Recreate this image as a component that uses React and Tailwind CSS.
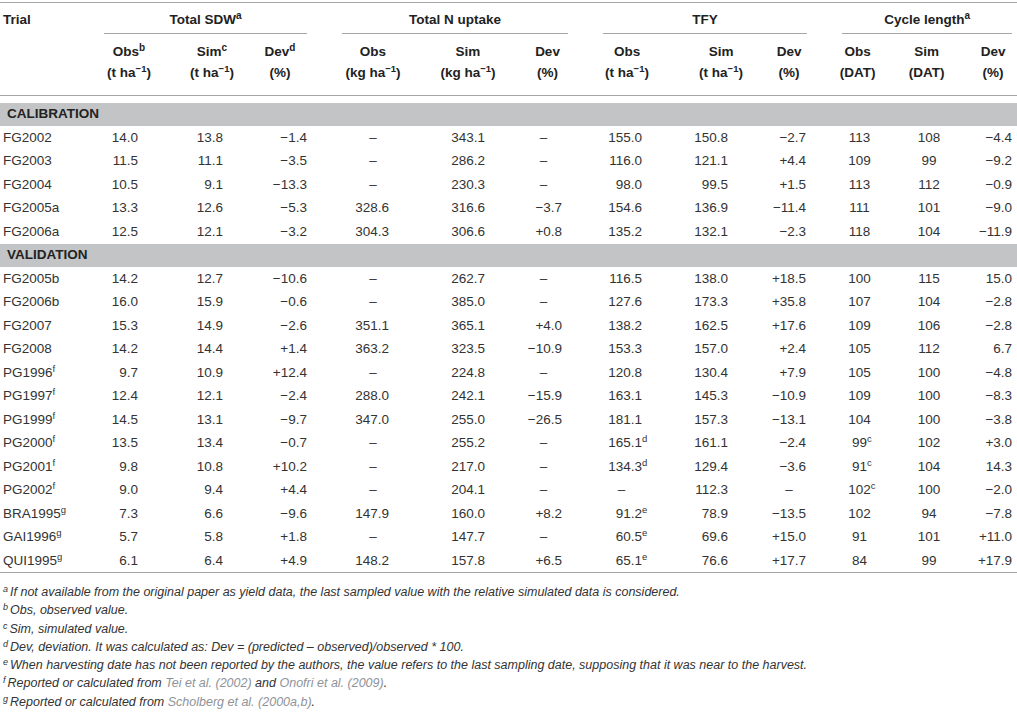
import React from "react";

const M = "\u2212";
const D = "\u2013";

const widths = ["w-[88px]", "w-[82px]", "w-[76px]", "w-[80px]", "w-[94px]", "w-[88px]", "w-[79px]", "w-[87px]", "w-[81px]", "w-[68px]", "w-[69px]", "w-[69px]", "w-[56px]"];

const numCls = [
  "text-right pr-[32px]",
  "text-right pr-[23px]",
  "text-right pr-[19px]",
  "text-right pr-[31px]",
  "text-right pr-[23px]",
  "text-right pr-[25px]",
  "text-right pr-[32px]",
  "text-right pr-[27px]",
  "text-right pr-[17px]",
  "text-center pl-[4px]",
  "text-center pl-[5px]",
  "text-right pr-[5px]",
];

const dashCls = [
  "text-center",
  "text-center",
  "text-center",
  "text-center",
  "text-center",
  "text-center pr-[8px]",
  "text-center pr-[18px]",
  "text-center",
  "text-center",
  "text-center",
  "text-center",
  "text-center",
];

const headCls = [
  "text-center",
  "text-center pl-[8px]",
  "text-center pr-[12px]",
  "text-center",
  "text-center pl-[8px]",
  "text-center",
  "text-center pr-[7px]",
  "text-center pl-[13px]",
  "text-center",
  "text-center",
  "text-center",
  "text-center pl-[8px]",
];

const subHeads = [
  ["Obs", "b"], ["Sim", "c"], ["Dev", "d"],
  ["Obs"], ["Sim"], ["Dev"],
  ["Obs"], ["Sim"], ["Dev"],
  ["Obs"], ["Sim"], ["Dev"],
];

const units = ["t", "t", "%", "kg", "kg", "%", "t", "t", "%", "DAT", "DAT", "%"];

const calibration = [
  ["FG2002", "", "14.0", "13.8", M + "1.4", D, "343.1", D, "155.0", "150.8", M + "2.7", "113", "108", M + "4.4"],
  ["FG2003", "", "11.5", "11.1", M + "3.5", D, "286.2", D, "116.0", "121.1", "+4.4", "109", "99", M + "9.2"],
  ["FG2004", "", "10.5", "9.1", M + "13.3", D, "230.3", D, "98.0", "99.5", "+1.5", "113", "112", M + "0.9"],
  ["FG2005a", "", "13.3", "12.6", M + "5.3", "328.6", "316.6", M + "3.7", "154.6", "136.9", M + "11.4", "111", "101", M + "9.0"],
  ["FG2006a", "", "12.5", "12.1", M + "3.2", "304.3", "306.6", "+0.8", "135.2", "132.1", M + "2.3", "118", "104", M + "11.9"],
];

const validation = [
  ["FG2005b", "", "14.2", "12.7", M + "10.6", D, "262.7", D, "116.5", "138.0", "+18.5", "100", "115", "15.0"],
  ["FG2006b", "", "16.0", "15.9", M + "0.6", D, "385.0", D, "127.6", "173.3", "+35.8", "107", "104", M + "2.8"],
  ["FG2007", "", "15.3", "14.9", M + "2.6", "351.1", "365.1", "+4.0", "138.2", "162.5", "+17.6", "109", "106", M + "2.8"],
  ["FG2008", "", "14.2", "14.4", "+1.4", "363.2", "323.5", M + "10.9", "153.3", "157.0", "+2.4", "105", "112", "6.7"],
  ["PG1996", "f", "9.7", "10.9", "+12.4", D, "224.8", D, "120.8", "130.4", "+7.9", "105", "100", M + "4.8"],
  ["PG1997", "f", "12.4", "12.1", M + "2.4", "288.0", "242.1", M + "15.9", "163.1", "145.3", M + "10.9", "109", "100", M + "8.3"],
  ["PG1999", "f", "14.5", "13.1", M + "9.7", "347.0", "255.0", M + "26.5", "181.1", "157.3", M + "13.1", "104", "100", M + "3.8"],
  ["PG2000", "f", "13.5", "13.4", M + "0.7", D, "255.2", D, "165.1^d", "161.1", M + "2.4", "99^c", "102", "+3.0"],
  ["PG2001", "f", "9.8", "10.8", "+10.2", D, "217.0", D, "134.3^d", "129.4", M + "3.6", "91^c", "104", "14.3"],
  ["PG2002", "f", "9.0", "9.4", "+4.4", D, "204.1", D, D, "112.3", D, "102^c", "100", M + "2.0"],
  ["BRA1995", "g", "7.3", "6.6", M + "9.6", "147.9", "160.0", "+8.2", "91.2^e", "78.9", M + "13.5", "102", "94", M + "7.8"],
  ["GAI1996", "g", "5.7", "5.8", "+1.8", D, "147.7", D, "60.5^e", "69.6", "+15.0", "91", "101", "+11.0"],
  ["QUI1995", "g", "6.1", "6.4", "+4.9", "148.2", "157.8", "+6.5", "65.1^e", "76.6", "+17.7", "84", "99", "+17.9"],
];

function Cell({ v, i }) {
  if (v === D) {
    return <td className={dashCls[i] + " p-0"}>{D}</td>;
  }
  const [num, sup] = v.split("^");
  return (
    <td className={numCls[i] + " p-0"}>
      <span className="relative">
        {num}
        {sup ? (
          <span className="absolute left-full top-[-1px] text-[9.5px] leading-none">{sup}</span>
        ) : null}
      </span>
    </td>
  );
}

function DataRow({ r }) {
  return (
    <tr className="h-[23.5px]">
      <td className="pl-[3px] p-0 text-left whitespace-nowrap">
        {r[0]}
        {r[1] ? <span className="relative top-[-5px] text-[9.5px] leading-none">{r[1]}</span> : null}
      </td>
      {r.slice(2).map((v, i) => (
        <Cell key={i} v={v} i={i} />
      ))}
    </tr>
  );
}

function Band({ label }) {
  return (
    <tr className="h-[23.5px] bg-[#c3c4c6]">
      <td colSpan={13} className="pl-[7px] p-0 font-bold text-[#222]">
        {label}
      </td>
    </tr>
  );
}

function Unit({ u }) {
  if (u === "%" || u === "DAT") return <>({u})</>;
  return (
    <>
      ({u} ha
      <span className="relative top-[-5px] text-[9.5px] leading-none">{M}1</span>)
    </>
  );
}

function Sup({ c }) {
  return <span className="relative top-[-5px] text-[10px] leading-none">{c}</span>;
}

function Foot({ l, children }) {
  return (
    <div className="leading-[18.3px]">
      <span className="relative top-[-4px] text-[9px] leading-none mr-[2px]">{l}</span>
      {children}
    </div>
  );
}

export default function App() {
  return (
    <div
      className="w-[1017px] h-[713px] bg-white text-[#333] overflow-hidden pt-[2px]"
      style={{ fontFamily: '"Liberation Sans", Arial, sans-serif' }}
    >
      <table className="w-[1017px] table-fixed border-collapse text-[13.5px] leading-[16px]">
        <colgroup>
          {widths.map((w, i) => (
            <col key={i} className={w} />
          ))}
        </colgroup>
        <tbody>
          <tr className="border-t border-[#a6a6a6] font-bold text-[#222]">
            <td className="p-0 pl-[3px] pt-[9px] pb-[6px] align-top text-left">Trial</td>
            <td colSpan={3} className="p-0 pt-[9px] align-top">
              <div className="ml-[16px] mr-[19px] pb-[5px] border-b border-[#a6a6a6] text-center">
                Total SDW<Sup c="a" />
              </div>
            </td>
            <td colSpan={3} className="p-0 pt-[9px] align-top">
              <div className="ml-[16px] mr-[19px] pb-[5px] border-b border-[#a6a6a6] text-center">
                Total N uptake
              </div>
            </td>
            <td colSpan={3} className="p-0 pt-[9px] align-top">
              <div className="ml-[16px] mr-[16px] pb-[5px] border-b border-[#a6a6a6] text-center">TFY</div>
            </td>
            <td colSpan={3} className="p-0 pt-[9px] align-top">
              <div className="ml-[19px] mr-[5px] pb-[5px] border-b border-[#a6a6a6] text-center">
                Cycle length<Sup c="a" />
              </div>
            </td>
          </tr>
          <tr className="font-bold text-[#222]">
            <td className="p-0 pt-[10px]"></td>
            {subHeads.map((h, i) => (
              <td key={i} className={headCls[i] + " p-0 pt-[10px] whitespace-nowrap"}>
                {h[0]}
                {h[1] ? <Sup c={h[1]} /> : null}
              </td>
            ))}
          </tr>
          <tr className="font-bold text-[#222] border-b border-[#a6a6a6]">
            <td className="p-0 pt-[5px] pb-[14px]"></td>
            {units.map((u, i) => (
              <td key={i} className={headCls[i] + " p-0 pt-[5px] pb-[14px] whitespace-nowrap"}>
                <Unit u={u} />
              </td>
            ))}
          </tr>
          <tr className="h-[7px]">
            <td colSpan={13} className="p-0"></td>
          </tr>
          <Band label="CALIBRATION" />
          {calibration.map((r, i) => (
            <DataRow key={i} r={r} />
          ))}
          <Band label="VALIDATION" />
          {validation.map((r, i) => (
            <DataRow key={i} r={r} />
          ))}
          <tr className="border-t border-[#a6a6a6] h-0">
            <td colSpan={13} className="p-0"></td>
          </tr>
        </tbody>
      </table>
      <div className="pl-[3px] pt-[10px] text-[12.5px] italic text-[#333]">
        <Foot l="a">
          If not available from the original paper as yield data, the last sampled value with the relative simulated data is considered.
        </Foot>
        <Foot l="b">Obs, observed value.</Foot>
        <Foot l="c">Sim, simulated value.</Foot>
        <Foot l="d">Dev, deviation. It was calculated as: Dev = (predicted {D} observed)/observed * 100.</Foot>
        <Foot l="e">
          When harvesting date has not been reported by the authors, the value refers to the last sampling date, supposing that it was near to the harvest.
        </Foot>
        <Foot l="f">
          Reported or calculated from <span className="text-[#8e9399]">Tei et al. (2002)</span> and{" "}
          <span className="text-[#8e9399]">Onofri et al. (2009)</span>.
        </Foot>
        <Foot l="g">
          Reported or calculated from <span className="text-[#8e9399]">Scholberg et al. (2000a,b)</span>.
        </Foot>
      </div>
    </div>
  );
}
